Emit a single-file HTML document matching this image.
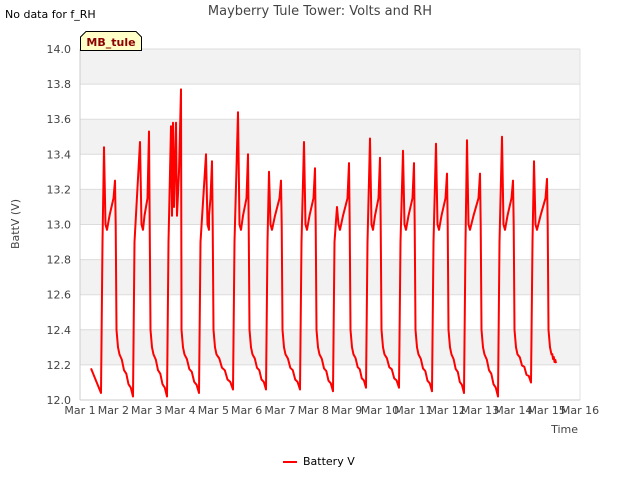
<!DOCTYPE html>
<html><head><meta charset="utf-8"><style>
body{margin:0;width:640px;height:480px;background:#fff;font-family:"DejaVu Sans","Liberation Sans",sans-serif;overflow:hidden}
svg{display:block}
text{font-family:"DejaVu Sans","Liberation Sans",sans-serif}
</style></head><body>
<svg width="640" height="480" viewBox="0 0 640 480" id="s">
<rect x="80" y="49" width="500" height="351" fill="#fff"/>
<rect x="80" y="49" width="500" height="35.1" fill="#f2f2f2"/>
<rect x="80" y="119.2" width="500" height="35.1" fill="#f2f2f2"/>
<rect x="80" y="189.4" width="500" height="35.1" fill="#f2f2f2"/>
<rect x="80" y="259.6" width="500" height="35.1" fill="#f2f2f2"/>
<rect x="80" y="329.8" width="500" height="35.1" fill="#f2f2f2"/>
<g stroke="#dcdcdc" stroke-width="1" id="grid"></g>
<line x1="80" y1="49" x2="80" y2="400" stroke="#ccc"/>
<line x1="580" y1="49" x2="580" y2="400" stroke="#e0e0e0"/>
<line x1="80" y1="400" x2="580" y2="400" stroke="#ccc"/>
<g font-size="11" fill="#444" id="lab"></g>
<path id="p" fill="none" stroke="#ff0000" stroke-width="2" stroke-linejoin="round"/>
<text x="320" y="15" font-size="13" fill="#444" text-anchor="middle">Mayberry Tule Tower: Volts and RH</text>
<text x="5" y="18" font-size="11" fill="#000">No data for f_RH</text>
<path d="M80.5,50.5 V37 L86,31.5 H136 L141.5,37 V50.5 Z" fill="#ffffc8" stroke="#000"/>
<text x="111" y="46" font-size="11" font-weight="bold" fill="#8b0000" text-anchor="middle">MB_tule</text>
<text x="19" y="224" font-size="11" fill="#444" text-anchor="middle" transform="rotate(-90 19 224)">BattV (V)</text>
<text x="578" y="433" font-size="11" fill="#444" text-anchor="end">Time</text>
<line x1="283" y1="462" x2="297" y2="462" stroke="#f00" stroke-width="2"/>
<text x="303" y="465" font-size="11" fill="#000">Battery V</text>
</svg>
<script>
var ns="http://www.w3.org/2000/svg",g=document.getElementById('grid'),lab=document.getElementById('lab');
function Y(v){return 400-(v-12)*175.5}
for(var i=0;i<=10;i++){var v=12+i*0.2,y=Y(v);
 var l=document.createElementNS(ns,'line');l.setAttribute('x1',80);l.setAttribute('x2',580);l.setAttribute('y1',y);l.setAttribute('y2',y);g.appendChild(l);
 var t=document.createElementNS(ns,'text');t.setAttribute('x',71);t.setAttribute('y',y+4);t.setAttribute('text-anchor','end');t.textContent=v.toFixed(1);lab.appendChild(t);}
for(var d=0;d<=15;d++){var x=80+d*33.333;
 var t=document.createElementNS(ns,'text');t.setAttribute('x',x);t.setAttribute('y',414);t.setAttribute('text-anchor','middle');t.textContent='Mar '+(d+1);lab.appendChild(t);}
var C=[[101,12.04,104,13.44,115,13.25],[133,12.02,140,13.47,149,13.53],[167,12.02,181,13.77,174,13.58],[199,12.04,206,13.40,212,13.36],[233,12.06,238,13.64,248,13.40],[266,12.06,269,13.30,281,13.25],[300,12.06,304,13.47,315,13.32],[333,12.05,337,13.10,349,13.35],[366,12.07,370,13.49,380,13.38],[399,12.07,403,13.42,414,13.35],[432,12.05,436,13.46,447,13.29],[464,12.04,467,13.48,480,13.29],[498,12.02,502,13.50,513,13.25],[531,12.10,534,13.36,547,13.26]];
var pts=[[91,12.18]];
for(var i=0;i<C.length;i++){var c=C[i];
 pts.push([c[0],c[1]],[c[0]+1.5,12.9]);
 var a=Math.min(c[2],c[4]),b=Math.max(c[2],c[4]),va=c[2]<c[4]?c[3]:c[5],vb=c[2]<c[4]?c[5]:c[3];
 if(i==2){pts.push([171,13.56],[172,13.05],[173,13.58],[174,13.1],[176,13.58],[177,13.05],[179,13.3],[181,13.77],[181.5,12.5]);}
 else{pts.push([a,va],[a+1.5,13.0],[a+3,12.97],[(a+b)/2,13.05],[b-1.5,13.15],[b,vb],[b+0.7,13.0]);}
 var e=(i==2?181.5:b+1.5);pts.push([e,12.4],[e+1.5,12.3],[e+3,12.26]);
 var nx=i+1<C.length?C[i+1][0]:556,nv=i+1<C.length?C[i+1][1]:12.21;
 var sx=e+3,sv=12.26,n=6;for(var k=1;k<n;k++){pts.push([sx+(nx-sx)*k/n,sv+(nv-sv)*k/n+(k%2?0.01:-0.01)]);}
 if(i+1==C.length)pts.push([556,12.21]);}
var d='';pts.forEach(function(p,j){d+=(j?'L':'M')+p[0].toFixed(1)+','+Y(p[1]).toFixed(1)});
document.getElementById('p').setAttribute('d',d);
</script>
</body></html>
